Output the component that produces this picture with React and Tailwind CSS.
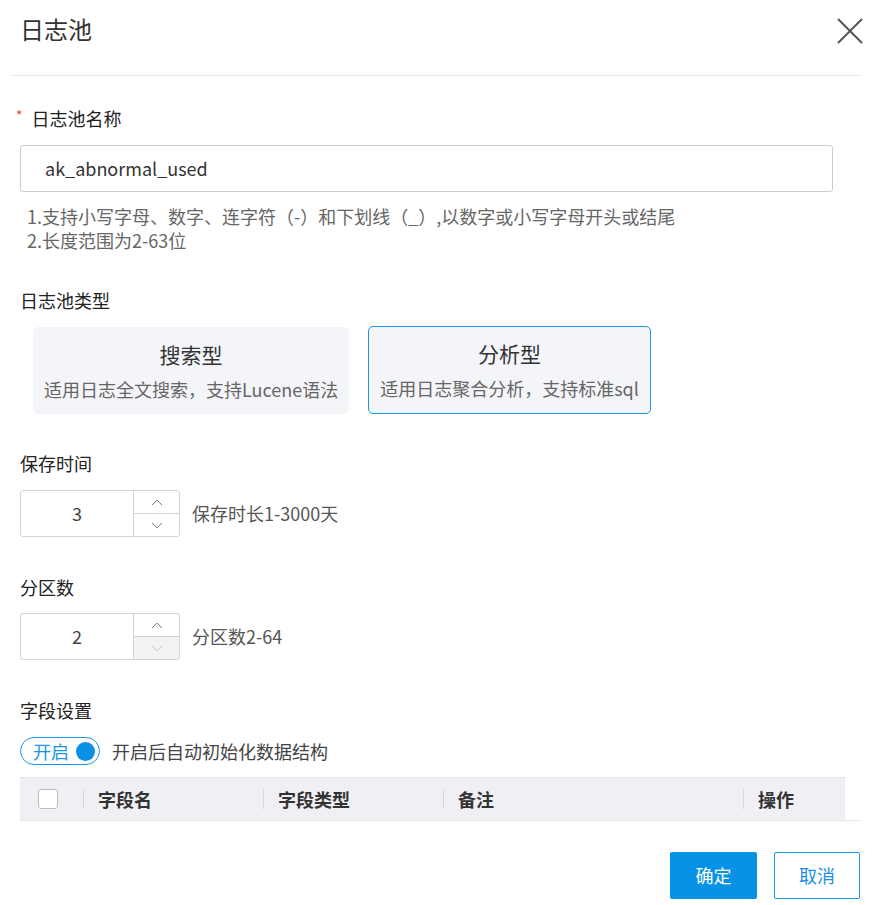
import React from 'react'

const ChevronUp = ({ className }) => (
  <svg className={className} width="12" height="7" viewBox="0 0 12 7" fill="none">
    <path d="M1 6L6 1.2L11 6" stroke="currentColor" strokeWidth="1" />
  </svg>
)

const ChevronDown = ({ className }) => (
  <svg className={className} width="12" height="7" viewBox="0 0 12 7" fill="none">
    <path d="M1 1L6 5.8L11 1" stroke="currentColor" strokeWidth="1" />
  </svg>
)

const NumberInput = ({ value, downDisabled }) => (
  <div className="flex w-[160px] h-[47px] border border-[#d4d4d4] rounded-[3px] overflow-hidden">
    <div className="w-[113px] flex items-center justify-center text-[18px] text-[#444] border-r border-[#d4d4d4]">
      {value}
    </div>
    <div className="flex-1 flex flex-col">
      <div className="h-[23px] flex items-center justify-center text-[#777] border-b border-[#d4d4d4]">
        <ChevronUp />
      </div>
      <div className={`flex-1 flex items-center justify-center ${downDisabled ? 'bg-[#f2f2f2] text-[#c4c4c4]' : 'text-[#777]'}`}>
        <ChevronDown />
      </div>
    </div>
  </div>
)

const Label = ({ children, className = '' }) => (
  <div className={`text-[18px] leading-[24px] text-[#222] ${className}`}>{children}</div>
)

export default function App() {
  return (
    <div
      className="w-[875px] h-[905px] bg-white overflow-hidden"
      style={{ fontFamily: '"Noto Sans CJK SC", "Noto Sans", sans-serif' }}
    >
      {/* Header */}
      <div className="ml-[12px] w-[848px] h-[76px] border-b border-[#e8e8e8] flex justify-between items-start">
        <div className="pl-[8px] pt-[13px] text-[24px] leading-[32px] text-[#333]">日志池</div>
        <button className="mt-[18px] -mr-[3px] text-[#555]">
          <svg width="26" height="26" viewBox="0 0 26 26" fill="none">
            <path d="M1 1L25 25M25 1L1 25" stroke="currentColor" strokeWidth="2" />
          </svg>
        </button>
      </div>

      <div className="px-[20px]">
        {/* 名称 */}
        <Label className="mt-[30px] flex items-center">
          <span className="text-[#f04134] text-[14px] -ml-[4px] mr-[9px] self-start leading-[18px]">*</span>
          日志池名称
        </Label>
        <div className="mt-[15px] w-[813px] h-[47px] border border-[#cccccc] rounded-[3px] flex items-center pl-[24px] text-[18px] text-[#333]">
          ak_abnormal_used
        </div>
        <div className="mt-[12px] pl-[7px] text-[18px] leading-[24px] text-[#666]">
          <div>1.支持小写字母、数字、连字符（-）和下划线（_）,以数字或小写字母开头或结尾</div>
          <div>2.长度范围为2-63位</div>
        </div>

        {/* 类型 */}
        <Label className="mt-[36px]">日志池类型</Label>
        <div className="mt-[15px] ml-[13px] flex gap-[19px]">
          <div className="h-[87px] px-[10px] bg-[#f4f5f9] rounded-[5px] border border-transparent flex flex-col items-center">
            <div className="mt-[12px] text-[21px] leading-[28px] text-[#333]">搜索型</div>
            <div className="mt-[9px] text-[18px] leading-[24px] text-[#666]">适用日志全文搜索，支持Lucene语法</div>
          </div>
          <div className="h-[88px] -mt-[1px] px-[11px] bg-[#f4f5f9] rounded-[5px] border border-[#1a96e6] flex flex-col items-center">
            <div className="mt-[12px] text-[21px] leading-[28px] text-[#333]">分析型</div>
            <div className="mt-[9px] text-[18px] leading-[24px] text-[#666]">适用日志聚合分析，支持标准sql</div>
          </div>
        </div>

        {/* 保存时间 */}
        <Label className="mt-[37px]">保存时间</Label>
        <div className="mt-[15px] flex items-center gap-[12px]">
          <NumberInput value="3" />
          <span className="text-[18px] text-[#555]">保存时长1-3000天</span>
        </div>

        {/* 分区数 */}
        <Label className="mt-[38px]">分区数</Label>
        <div className="mt-[14px] flex items-center gap-[12px]">
          <NumberInput value="2" downDisabled />
          <span className="text-[18px] text-[#555]">分区数2-64</span>
        </div>

        {/* 字段设置 */}
        <Label className="mt-[38px]">字段设置</Label>
        <div className="mt-[15px] flex items-center">
          <div className="w-[80px] h-[28px] border border-[#1a96e6] rounded-full flex items-center justify-between pl-[12px] pr-[4px]">
            <span className="text-[18px] leading-none text-[#1a96e6]">开启</span>
            <span className="w-[19px] h-[19px] rounded-full bg-[#0a8fe6]"></span>
          </div>
          <span className="ml-[12px] text-[18px] text-[#444]">开启后自动初始化数据结构</span>
        </div>

        {/* 表头 */}
        <div className="mt-[12px] w-[840px] border-b border-[#e6e6e6]">
          <div className="w-[825px] h-[43px] bg-[#f0f0f4] border-t border-[#e4e4e8] flex items-center text-[18px] font-bold text-[#333]">
            <div className="w-[63px] flex items-center pl-[18px]">
              <span className="w-[20px] h-[20px] bg-white border border-[#bdbdbd] rounded-[3px]"></span>
            </div>
            <div className="w-[180px] flex items-center">
              <span className="w-px h-[20px] bg-[#d6d6d6]"></span>
              <span className="ml-[14px]">字段名</span>
            </div>
            <div className="w-[180px] flex items-center">
              <span className="w-px h-[20px] bg-[#d6d6d6]"></span>
              <span className="ml-[14px]">字段类型</span>
            </div>
            <div className="w-[300px] flex items-center">
              <span className="w-px h-[20px] bg-[#d6d6d6]"></span>
              <span className="ml-[14px]">备注</span>
            </div>
            <div className="flex-1 flex items-center">
              <span className="w-px h-[20px] bg-[#d6d6d6]"></span>
              <span className="ml-[14px]">操作</span>
            </div>
          </div>
        </div>

        {/* 按钮 */}
        <div className="mt-[31px] flex justify-end gap-[17px] -mr-[5px]">
          <button className="w-[87px] h-[47px] bg-[#0792e6] text-white text-[18px] rounded-[2px]">确定</button>
          <button className="w-[86px] h-[47px] bg-white border border-[#1a96e6] text-[#1a8fe0] text-[18px] rounded-[2px]">取消</button>
        </div>
      </div>
    </div>
  )
}
